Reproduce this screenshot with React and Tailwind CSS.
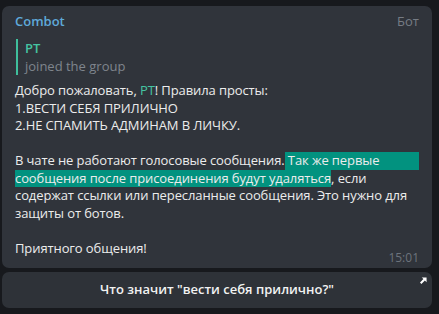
export default function App() {
    return (
        <div className="w-[439px] h-[314px] bg-[#17191d] overflow-hidden pt-[6px] pl-[2px] pr-[7px] font-['Open_Sans',sans-serif] text-[13px]">
            {/* Message bubble */}
            <div className="bg-[#30343b] rounded-[7px] h-[262px] pl-[13px] pr-[13px] pt-[6px] relative">
                <div className="flex justify-between items-center h-[20px]">
                    <span className="font-semibold text-[#5fa9d9]">Combot</span>
                    <span className="text-[#767c85]">Бот</span>
                </div>
                <div className="mt-[7px] ml-[1px] border-l-2 border-[#3fbf9c] pl-[7px] leading-[18px]">
                    <div className="font-semibold text-[#45c4a2]">PT</div>
                    <div className="text-[#7f858d]">joined the group</div>
                </div>
                <div className="mt-[7px] leading-[17.5px] text-[#ececec] whitespace-nowrap tracking-[-0.1px]">
                    <div>Добро пожаловать, <span className="text-[#45c4a2]">PT</span>! Правила просты:</div>
                    <div>1.ВЕСТИ СЕБЯ ПРИЛИЧНО</div>
                    <div>2.НЕ СПАМИТЬ АДМИНАМ В ЛИЧКУ.</div>
                    <div className="h-[17.5px]" />
                    {/* selection runs to the end of the wrapped line */}
                    <div className="flex">
                        <span>В чате не работают голосовые сообщения.</span>
                        <span className="bg-[#02927f] flex-1 whitespace-pre"> Так же первые</span>
                    </div>
                    <div><span className="bg-[#02927f] inline-block">сообщения после присоединения будут удаляться</span>, если</div>
                    <div>содержат ссылки или пересланные сообщения. Это нужно для</div>
                    <div>защиты от ботов.</div>
                    <div className="h-[17.5px]" />
                    <div>Приятного общения!</div>
                </div>
                <span className="absolute right-[13px] bottom-[1px] text-[12px] text-[#6c737c]">15:01</span>
            </div>

            {/* Inline keyboard button */}
            <div className="mt-[4px] bg-[#2e3238] rounded-[7px] h-[36px] flex items-center justify-center relative">
                <span className="font-semibold text-[#f2f2f2]">Что значит "вести себя прилично?"</span>
                <svg className="absolute right-[5px] top-[5px]" width="7" height="7" viewBox="0 0 8 8">
                    <path d="M2 0.5 H7.5 V6 L5.6 4.1 L1.6 8 L0 6.4 L3.9 2.4 Z" fill="#ffffff" />
                </svg>
            </div>
        </div>
    );
}
